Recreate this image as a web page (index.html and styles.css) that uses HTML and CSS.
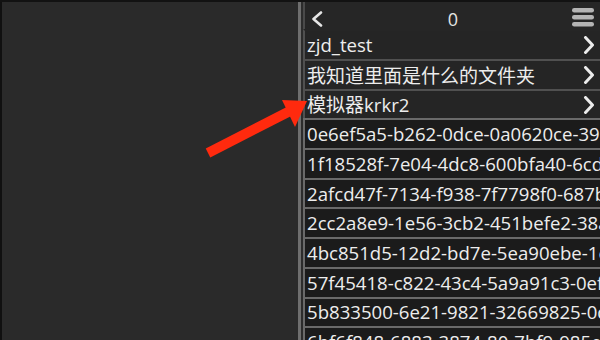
FILE: index.html
```html
<!DOCTYPE html>
<html>
<head>
<meta charset="utf-8">
<link rel="stylesheet" href="styles.css">
</head>
<body>
<div class="screen">
  <div class="left-pane"></div>
  <div class="divider"></div>
  <div class="gap"></div>
  <div class="panel">
    <div class="header">
      <svg class="back" width="14" height="16" viewBox="0 0 14 16"><path d="M11 1.5 L3.5 8 L11 14.5" fill="none" stroke="#e6e6e6" stroke-width="2.6" stroke-linecap="round" stroke-linejoin="round"/></svg>
      <span class="count">0</span>
      <svg class="menu" width="22" height="19" viewBox="0 0 22 19"><rect x="0" y="0" width="22" height="4.5" rx="2.2" fill="#b4b4b4"/><rect x="0" y="7" width="22" height="4.5" rx="2.2" fill="#b4b4b4"/><rect x="0" y="14" width="22" height="4.5" rx="2.2" fill="#b4b4b4"/></svg>
    </div>
    <div class="row folder first"><span class="name">zjd_test</span><svg class="chev" width="12" height="18" viewBox="0 0 12 18"><path d="M2.5 1.5 L9.5 9 L2.5 16.5" fill="none" stroke="#ececec" stroke-width="3" stroke-linecap="round" stroke-linejoin="round"/></svg></div>
    <div class="row folder"><span class="name cjk">我知道里面是什么的文件夹</span><svg class="chev" width="12" height="18" viewBox="0 0 12 18"><path d="M2.5 1.5 L9.5 9 L2.5 16.5" fill="none" stroke="#ececec" stroke-width="3" stroke-linecap="round" stroke-linejoin="round"/></svg></div>
    <div class="row folder"><span class="name"><span class="cjk">模拟器</span>krkr2</span><svg class="chev" width="12" height="18" viewBox="0 0 12 18"><path d="M2.5 1.5 L9.5 9 L2.5 16.5" fill="none" stroke="#ececec" stroke-width="3" stroke-linecap="round" stroke-linejoin="round"/></svg></div>
    <div class="row file"><span class="name">0e6ef5a5-b262-0dce-0a0620ce-39e4a1c2</span></div>
    <div class="row file"><span class="name">1f18528f-7e04-4dc8-600bfa40-6cd2b7a1</span></div>
    <div class="row file"><span class="name">2afcd47f-7134-f938-7f7798f0-687b3c2e</span></div>
    <div class="row file"><span class="name">2cc2a8e9-1e56-3cb2-451befe2-38a9d4f0</span></div>
    <div class="row file"><span class="name">4bc851d5-12d2-bd7e-5ea90ebe-1e7c6f3a</span></div>
    <div class="row file"><span class="name">57f45418-c822-43c4-5a9a91c3-0ef1b8d2</span></div>
    <div class="row file"><span class="name">5b833500-6e21-9821-32669825-0d4f7a6c</span></div>
    <div class="row file"><span class="name">6bf6f848-6883-3874-80-7bf9-985e2c1a</span></div>
  </div>
  <svg class="arrow" width="600" height="340" viewBox="0 0 600 340">
    <line x1="208" y1="153" x2="290" y2="111" stroke="#ff2a0e" stroke-width="10"/>
    <polygon points="282,100 307,101 295,127" fill="#ff2a0e"/>
  </svg>
</div>
</body>
</html>
```
FILE: styles.css
```css
html, body {
  margin: 0;
  padding: 0;
  background: #2a2a2a;
}
.screen {
  position: relative;
  width: 600px;
  height: 340px;
  overflow: hidden;
  display: flex;
  background: #2a2a2a;
  border-top: 2px solid #121212;
  box-sizing: border-box;
  font-family: "Open Sans", "Noto Sans", "Noto Sans CJK SC", sans-serif;
  color: #ededed;
}
.left-pane {
  flex: 0 0 296px;
  border-left: 2px solid #101010;
  background: #2a2a2a;
}
.divider {
  flex: 0 0 3px;
  background: #6e6e6e;
}
.gap {
  flex: 0 0 2px;
  background: #2c2c2c;
}
.panel {
  flex: 1 1 auto;
  min-width: 0;
  display: flex;
  flex-direction: column;
  background: #262626;
  overflow: hidden;
}
.header {
  height: 27px;
  flex: 0 0 27px;
  display: flex;
  align-items: center;
  justify-content: space-between;
  padding: 6px 6px 0 5px;
  box-sizing: border-box;
  background: #262626;
  border-left: 2px solid #4a4a4a;
}
.back {
  display: block;
}
.count {
  font-size: 18px;
  line-height: 20px;
  margin-left: 10px;
  color: #e4e4e4;
}
.menu {
  display: block;
  margin-top: -2px;
}
.row {
  flex: 0 0 auto;
  height: 27.7px;
  display: flex;
  align-items: center;
  justify-content: space-between;
  border-top: 2px solid #6a6a6a;
  border-left: 2px solid #6a6a6a;
  padding-left: 2px;
  padding-right: 5px;
  overflow: hidden;
  white-space: nowrap;
}
.row.folder {
  background: #252525;
  border-top-color: #505050;
  border-left-color: #505050;
}
.row.folder.first {
  height: 28px;
  border-top-color: #262626;
}
.row.file {
  background: #1b1b1b;
}
.name {
  font-size: 18.6px;
  font-weight: 500;
  line-height: 24px;
  white-space: nowrap;
  flex: 0 0 auto;
}
.cjk {
  font-size: 19px;
  font-weight: 400;
  font-family: "Noto Sans CJK SC", sans-serif;
}
.chev {
  display: block;
  flex: 0 0 auto;
}
.arrow {
  position: absolute;
  left: 0;
  top: -2px;
  pointer-events: none;
}
```
